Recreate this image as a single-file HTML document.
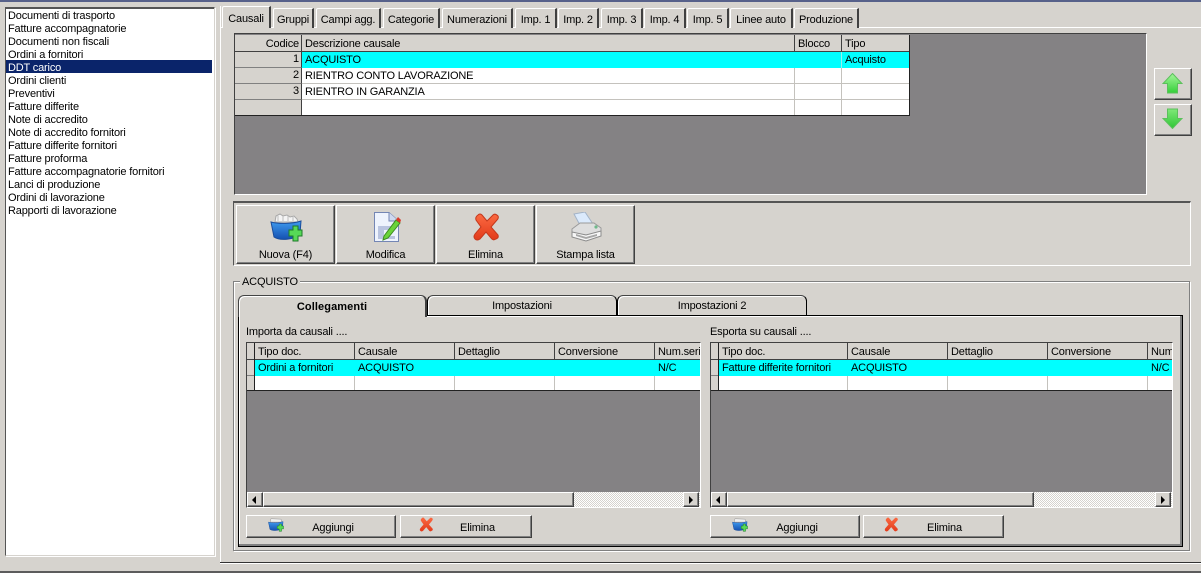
<!DOCTYPE html>
<html><head><meta charset="utf-8"><style>
html,body{margin:0;padding:0;background:#d6d3ce}
#r{position:relative;width:1201px;height:573px;overflow:hidden;background:#d6d3ce;font:11px/14px "Liberation Sans",sans-serif;letter-spacing:-.17px;color:#000}
#r div,#r svg{position:absolute;box-sizing:border-box}
.t{white-space:nowrap}
.li{left:8px;white-space:nowrap;height:13px;line-height:15px}
.tab{height:20px;top:8px;background:#d6d3ce;border-top:1px solid #fff;border-left:1px solid #fff;border-right:2px solid #404040;text-align:center;line-height:23px;white-space:nowrap;border-top-left-radius:2px}
.btn{background:#d6d3ce;border:1px solid;border-color:#fff #404040 #404040 #fff;box-shadow:inset -1px -1px 0 #808080;text-align:center;white-space:nowrap}
.h{background:#d6d3ce;border-right:1px solid #404040;border-bottom:1px solid #404040;height:17px;line-height:18px;padding-left:3px;white-space:nowrap;overflow:hidden}
.c{border-right:1px solid #c4c2bd;border-bottom:1px solid #c4c2bd;height:16px;line-height:17px;padding-left:3px;white-space:nowrap;overflow:hidden}
.cy{background:#0ff}.w{background:#fff}.rh{background:#d6d3ce;border-right:1px solid #404040;border-bottom:1px solid #808080}
.sb{background:#d6d3ce;border:1px solid;border-color:#fff #404040 #404040 #fff;box-shadow:inset -1px -1px 0 #808080}
.pt{height:21px;top:295px;background:#d6d3ce;border:1px solid #000;border-top:1px solid #444;border-radius:6px 6px 0 0;box-shadow:inset 1px 1px 0 #fff;text-align:center;line-height:21px;white-space:nowrap}
</style></head><body><div id="r">
<div style="left:0;top:0;width:1201px;height:2px;background:#57618a"></div>
<div style="left:0;top:571px;width:1201px;height:2px;background:#5c5c5c"></div>
<div style="left:220px;top:562px;width:981px;height:1px;background:#333"></div>
<div style="left:220px;top:563px;width:981px;height:1px;background:#fff"></div>
<div style="left:220px;top:6px;width:1px;height:556px;background:#fff"></div>

<!-- list -->
<div style="left:5px;top:7px;width:210px;height:549px;background:#fff;border:1px solid;border-color:#555 #d6d3ce #d6d3ce #555;box-shadow:inset 0 1px 0 #555, 1px 1px 0 #fff"></div>
<div class="li" style="top:9px">Documenti di trasporto</div>
<div class="li" style="top:22px">Fatture accompagnatorie</div>
<div class="li" style="top:35px">Documenti non fiscali</div>
<div class="li" style="top:48px">Ordini a fornitori</div>
<div style="left:6px;top:60px;width:206px;height:13px;background:#0a246a"></div>
<div class="li" style="top:61px;color:#fff">DDT carico</div>
<div class="li" style="top:74px">Ordini clienti</div>
<div class="li" style="top:87px">Preventivi</div>
<div class="li" style="top:100px">Fatture differite</div>
<div class="li" style="top:113px">Note di accredito</div>
<div class="li" style="top:126px">Note di accredito fornitori</div>
<div class="li" style="top:139px">Fatture differite fornitori</div>
<div class="li" style="top:152px">Fatture proforma</div>
<div class="li" style="top:165px">Fatture accompagnatorie fornitori</div>
<div class="li" style="top:178px">Lanci di produzione</div>
<div class="li" style="top:191px">Ordini di lavorazione</div>
<div class="li" style="top:204px">Rapporti di lavorazione</div>

<!-- main tabs -->
<div style="left:221px;top:27px;width:980px;height:1px;background:#fff"></div>
<div class="tab" style="left:222px;top:6px;width:49px;height:22px;background:#d6d3ce;z-index:2;line-height:24px">Causali</div>
<div class="tab" style="left:273px;width:41px">Gruppi</div>
<div class="tab" style="left:316px;width:65px">Campi agg.</div>
<div class="tab" style="left:383px;width:57px">Categorie</div>
<div class="tab" style="left:442px;width:71px">Numerazioni</div>
<div class="tab" style="left:515px;width:42px">Imp. 1</div>
<div class="tab" style="left:558px;width:41px">Imp. 2</div>
<div class="tab" style="left:601px;width:42px">Imp. 3</div>
<div class="tab" style="left:644px;width:42px">Imp. 4</div>
<div class="tab" style="left:687px;width:42px">Imp. 5</div>
<div class="tab" style="left:730px;width:63px">Linee auto</div>
<div class="tab" style="left:794px;width:65px">Produzione</div>

<!-- top grid -->
<div style="left:234px;top:33px;width:913px;height:162px;background:#848284;border:1px solid;border-color:#404040 #fff #fff #404040"></div>
<div class="h" style="left:235px;top:35px;width:67px;text-align:right;padding-right:2px">Codice</div>
<div class="h" style="left:302px;top:35px;width:493px">Descrizione causale</div>
<div class="h" style="left:795px;top:35px;width:47px">Blocco</div>
<div class="h" style="left:842px;top:35px;width:68px">Tipo</div>
<div class="rh" style="left:235px;top:52px;width:67px;height:16px;text-align:right;padding-right:2px;line-height:15px">1</div>
<div class="rh" style="left:235px;top:68px;width:67px;height:16px;text-align:right;padding-right:2px;line-height:15px">2</div>
<div class="rh" style="left:235px;top:84px;width:67px;height:16px;text-align:right;padding-right:2px;line-height:15px">3</div>
<div class="rh" style="left:235px;top:100px;width:67px;height:16px"></div>
<div class="c cy" style="left:302px;top:52px;width:493px;border:0">ACQUISTO</div>
<div class="c cy" style="left:795px;top:52px;width:47px;border:0;border-right:1px solid #9ee"></div>
<div class="c cy" style="left:842px;top:52px;width:68px;border:0">Acquisto</div>
<div class="c w" style="left:302px;top:68px;width:493px">RIENTRO CONTO LAVORAZIONE</div>
<div class="c w" style="left:795px;top:68px;width:47px"></div>
<div class="c w" style="left:842px;top:68px;width:68px"></div>
<div class="c w" style="left:302px;top:84px;width:493px">RIENTRO IN GARANZIA</div>
<div class="c w" style="left:795px;top:84px;width:47px"></div>
<div class="c w" style="left:842px;top:84px;width:68px"></div>
<div class="c w" style="left:302px;top:100px;width:493px"></div>
<div class="c w" style="left:795px;top:100px;width:47px"></div>
<div class="c w" style="left:842px;top:100px;width:68px"></div>
<div style="left:235px;top:115px;width:675px;height:1px;background:#222"></div>
<div style="left:909px;top:35px;width:1px;height:81px;background:#222"></div>

<!-- arrows -->
<div class="btn" style="left:1154px;top:68px;width:38px;height:32px"></div>
<div class="btn" style="left:1154px;top:104px;width:38px;height:32px"></div>
<svg style="left:1162px;top:73px" width="21" height="21" viewBox="0 0 21 21"><defs><linearGradient id="g1" x1="0" y1="0" x2="0" y2="1"><stop offset="0" stop-color="#a4f59a"/><stop offset="1" stop-color="#35d03a"/></linearGradient><linearGradient id="g2" x1="0" y1="0" x2="0" y2="1"><stop offset="0" stop-color="#7fe878"/><stop offset="1" stop-color="#2fc635"/></linearGradient><linearGradient id="bl" x1="0" y1="0" x2="0" y2="1"><stop offset="0" stop-color="#3f9cf0"/><stop offset="1" stop-color="#1450b0"/></linearGradient><linearGradient id="rd" x1="0" y1="0" x2="0" y2="1"><stop offset="0" stop-color="#fb6a42"/><stop offset="1" stop-color="#e23a1a"/></linearGradient></defs><path d="M10.5 .5 L20 10.5 H15.5 V20 H5.5 V10.5 H1 Z" fill="url(#g1)" stroke="#5cc05c"/></svg>
<svg style="left:1162px;top:108px" width="21" height="21" viewBox="0 0 21 21"><path d="M5.5 1 H15.5 V10.5 H20 L10.5 20.5 L1 10.5 H5.5 Z" fill="url(#g2)" stroke="#5cc05c"/></svg>

<!-- toolbar -->
<div style="left:233px;top:201px;width:958px;height:65px;border-top:2px solid #555;border-left:1px solid #555;border-bottom:1px solid #fff;border-right:1px solid #fff"></div>
<div class="btn" style="left:236px;top:205px;width:99px;height:59px;padding-top:42px">Nuova (F4)</div>
<div class="btn" style="left:336px;top:205px;width:99px;height:59px;padding-top:42px">Modifica</div>
<div class="btn" style="left:436px;top:205px;width:99px;height:59px;padding-top:42px">Elimina</div>
<div class="btn" style="left:536px;top:205px;width:99px;height:59px;padding-top:42px">Stampa lista</div>

<svg style="left:270px;top:212px" width="33" height="32" viewBox="0 0 33 32"><path d="M5 10 L6 4 L10 2 L13 4 L17 3 L20 5 L24 4 L27 7 L28 10Z" fill="#f4f4f4" stroke="#a8a8a8"/><path d="M8 4V9M13 4V9M18 4V9M23 5V9" stroke="#bbb"/><path d="M1 10 C8 12 22 12 31 9 L30 22 C24 28 10 29 4 25Z" fill="url(#bl)" stroke="#1a4c9a"/><path d="M20 18 H24 V14 H29 V18 H33 V24 H29 V29 H24 V24 H20Z" transform="translate(-1,0)" fill="#57d957" stroke="#1e7a2a"/></svg>
<svg style="left:373px;top:212px" width="28" height="30" viewBox="0 0 28 30"><path d="M1.5 .5 H16 L25.5 9 V29.5 H1.5Z" fill="#eef3fd" stroke="#7486b4"/><path d="M16 .5 V9 H25.5" fill="#cfd9ef" stroke="#7486b4"/><rect x="5" y="14" width="17" height="4" fill="#b9c4e0"/><rect x="5" y="18" width="6" height="8" fill="#b9c4e0"/><rect x="5" y="24" width="17" height="3" fill="#b9c4e0"/><path d="M11 24 L23 8 L27 11 L15 26 L10 28Z" fill="#6ad43a" stroke="#3d8a22"/><path d="M23 8 L25 5 L28 8 L27 11Z" fill="#d83b2b"/></svg>
<svg style="left:473px;top:213px" width="27" height="28" viewBox="0 0 27 28"><path d="M5 2 Q7 0 9 2 L14 8 L20 2 Q22 0 25 3 Q26 5 24 7 L18 14 L25 22 Q26 25 23 26 Q20 28 18 25 L13 19 L7 26 Q4 28 2 26 Q0 24 2 21 L8 14 L3 7 Q2 4 5 2Z" fill="url(#rd)" stroke="#c4381c"/></svg>
<svg style="left:571px;top:212px" width="31" height="30" viewBox="0 0 31 30"><path d="M3 2 L14 0 L22 12 L10 15Z" fill="#dbeafc" stroke="#a4b4c8"/><path d="M1 17 L9 11 H23 L30 16 V21 L15 23 L1 21Z" fill="#dedede" stroke="#9a9a9a"/><path d="M1 20 L15 23 L30 19 V24 L15 29 L1 25Z" fill="#f6f6f6" stroke="#8c8c8c"/><path d="M5 22 L15 25 L26 22 V24 L15 27 L5 24Z" fill="#a8a8a8"/><circle cx="25" cy="15" r="1.6" fill="#6fb98a"/></svg>

<!-- group -->
<div style="left:233px;top:281px;width:957px;height:270px;border:1px solid #808080;box-shadow:1px 1px 0 #fff, inset 1px 1px 0 #fff"></div>
<div class="t" style="left:240px;top:275px;background:#d6d3ce;padding:0 2px">ACQUISTO</div>

<!-- page -->
<div style="left:238px;top:315px;width:945px;height:232px;border:1px solid #000;box-shadow:inset -2px -2px 0 #808080, inset 1px 1px 0 #fff"></div>
<div class="pt" style="left:427px;width:190px">Impostazioni</div>
<div class="pt" style="left:617px;width:190px">Impostazioni 2</div>
<div style="left:238px;top:295px;width:189px;height:22px;background:#d6d3ce;border-top:1px solid #444;border-left:1px solid #444;border-right:2px solid #404040;border-radius:6px 6px 0 0;box-shadow:inset 1px 1px 0 #fff;text-align:center;line-height:23px;font-weight:bold;letter-spacing:.1px;z-index:2">Collegamenti</div>

<div class="t" style="left:246px;top:325px">Importa da causali ....</div>
<div class="t" style="left:710px;top:325px">Esporta su causali ....</div>

<!-- left grid -->
<div style="left:246px;top:342px;width:455px;height:166px;background:#848284;border:1px solid;border-color:#404040 #fff #fff #404040"></div>
<div style="left:247px;top:343px;width:453px;height:48px;overflow:hidden">
<div class="h" style="left:0;top:0;width:8px;padding:0"></div>
<div class="h" style="left:8px;top:0;width:100px">Tipo doc.</div>
<div class="h" style="left:108px;top:0;width:100px">Causale</div>
<div class="h" style="left:208px;top:0;width:100px">Dettaglio</div>
<div class="h" style="left:308px;top:0;width:100px">Conversione</div>
<div class="h" style="left:408px;top:0;width:60px">Num.serie</div>
<div class="rh" style="left:0;top:17px;width:8px;height:16px"></div>
<div class="rh" style="left:0;top:33px;width:8px;height:15px"></div>
<div class="c cy" style="left:8px;top:17px;width:100px;border:0">Ordini a fornitori</div>
<div class="c cy" style="left:108px;top:17px;width:100px;border:0">ACQUISTO</div>
<div class="c cy" style="left:208px;top:17px;width:100px;border:0"></div>
<div class="c cy" style="left:308px;top:17px;width:100px;border:0"></div>
<div class="c cy" style="left:408px;top:17px;width:60px;border:0">N/C</div>
<div class="c w" style="left:8px;top:33px;width:100px"></div>
<div class="c w" style="left:108px;top:33px;width:100px"></div>
<div class="c w" style="left:208px;top:33px;width:100px"></div>
<div class="c w" style="left:308px;top:33px;width:100px"></div>
<div class="c w" style="left:408px;top:33px;width:60px"></div>
<div style="left:0;top:47px;width:453px;height:1px;background:#222"></div>
<div style="left:7px;top:0;width:1px;height:48px;background:#222"></div>
</div>
<div style="left:247px;top:492px;width:453px;height:15px;background-color:#eeece8;background-image:repeating-conic-gradient(#d6d3ce 0 25%,#fff 0 50%);background-size:2px 2px"></div>
<div class="sb" style="left:247px;top:492px;width:16px;height:15px"></div>
<svg style="left:252px;top:496px" width="5" height="8"><path d="M4 0V8L0 4Z"/></svg>
<div class="sb" style="left:263px;top:492px;width:311px;height:15px"></div>
<div class="sb" style="left:683px;top:492px;width:16px;height:15px"></div>
<svg style="left:689px;top:496px" width="5" height="8"><path d="M0 0V8L4 4Z"/></svg>

<!-- right grid -->
<div style="left:710px;top:342px;width:463px;height:166px;background:#848284;border:1px solid;border-color:#404040 #fff #fff #404040"></div>
<div style="left:711px;top:343px;width:461px;height:48px;overflow:hidden">
<div class="h" style="left:0;top:0;width:8px;padding:0"></div>
<div class="h" style="left:8px;top:0;width:129px">Tipo doc.</div>
<div class="h" style="left:137px;top:0;width:100px">Causale</div>
<div class="h" style="left:237px;top:0;width:100px">Dettaglio</div>
<div class="h" style="left:337px;top:0;width:100px">Conversione</div>
<div class="h" style="left:437px;top:0;width:60px">Num.serie</div>
<div class="rh" style="left:0;top:17px;width:8px;height:16px"></div>
<div class="rh" style="left:0;top:33px;width:8px;height:15px"></div>
<div class="c cy" style="left:8px;top:17px;width:129px;border:0">Fatture differite fornitori</div>
<div class="c cy" style="left:137px;top:17px;width:100px;border:0">ACQUISTO</div>
<div class="c cy" style="left:237px;top:17px;width:100px;border:0"></div>
<div class="c cy" style="left:337px;top:17px;width:100px;border:0"></div>
<div class="c cy" style="left:437px;top:17px;width:60px;border:0">N/C</div>
<div class="c w" style="left:8px;top:33px;width:129px"></div>
<div class="c w" style="left:137px;top:33px;width:100px"></div>
<div class="c w" style="left:237px;top:33px;width:100px"></div>
<div class="c w" style="left:337px;top:33px;width:100px"></div>
<div class="c w" style="left:437px;top:33px;width:60px"></div>
<div style="left:0;top:47px;width:461px;height:1px;background:#222"></div>
<div style="left:7px;top:0;width:1px;height:48px;background:#222"></div>
</div>
<div style="left:711px;top:492px;width:461px;height:15px;background-color:#eeece8;background-image:repeating-conic-gradient(#d6d3ce 0 25%,#fff 0 50%);background-size:2px 2px"></div>
<div class="sb" style="left:711px;top:492px;width:16px;height:15px"></div>
<svg style="left:716px;top:496px" width="5" height="8"><path d="M4 0V8L0 4Z"/></svg>
<div class="sb" style="left:727px;top:492px;width:307px;height:15px"></div>
<div class="sb" style="left:1155px;top:492px;width:16px;height:15px"></div>
<svg style="left:1161px;top:496px" width="5" height="8"><path d="M0 0V8L4 4Z"/></svg>

<!-- bottom buttons -->
<div class="btn" style="left:246px;top:515px;width:150px;height:23px;line-height:24px;padding-left:24px">Aggiungi</div>
<div class="btn" style="left:400px;top:515px;width:132px;height:23px;line-height:24px;padding-left:23px">Elimina</div>
<div class="btn" style="left:710px;top:515px;width:150px;height:23px;line-height:24px;padding-left:24px">Aggiungi</div>
<div class="btn" style="left:863px;top:515px;width:141px;height:23px;line-height:24px;padding-left:22px">Elimina</div>
<svg style="left:268px;top:517px" width="16" height="16" viewBox="0 0 33 32"><path d="M5 10 L6 3 L27 4 L28 10Z" fill="#eee" stroke="#999"/><path d="M1 10 C8 12 22 12 31 9 L30 22 C24 28 10 29 4 25Z" fill="url(#bl)" stroke="#1a4c9a"/><path d="M19 18 H23 V14 H28 V18 H32 V24 H28 V29 H23 V24 H19Z" fill="#57d957" stroke="#1e7a2a"/></svg>
<svg style="left:419px;top:517px" width="15" height="15" viewBox="0 0 27 28"><path d="M5 2 Q7 0 9 2 L14 8 L20 2 Q22 0 25 3 Q26 5 24 7 L18 14 L25 22 Q26 25 23 26 Q20 28 18 25 L13 19 L7 26 Q4 28 2 26 Q0 24 2 21 L8 14 L3 7 Q2 4 5 2Z" fill="url(#rd)"/></svg>
<svg style="left:732px;top:517px" width="16" height="16" viewBox="0 0 33 32"><path d="M5 10 L6 3 L27 4 L28 10Z" fill="#eee" stroke="#999"/><path d="M1 10 C8 12 22 12 31 9 L30 22 C24 28 10 29 4 25Z" fill="url(#bl)" stroke="#1a4c9a"/><path d="M19 18 H23 V14 H28 V18 H32 V24 H28 V29 H23 V24 H19Z" fill="#57d957" stroke="#1e7a2a"/></svg>
<svg style="left:884px;top:517px" width="15" height="15" viewBox="0 0 27 28"><path d="M5 2 Q7 0 9 2 L14 8 L20 2 Q22 0 25 3 Q26 5 24 7 L18 14 L25 22 Q26 25 23 26 Q20 28 18 25 L13 19 L7 26 Q4 28 2 26 Q0 24 2 21 L8 14 L3 7 Q2 4 5 2Z" fill="url(#rd)"/></svg>
</div></body></html>
